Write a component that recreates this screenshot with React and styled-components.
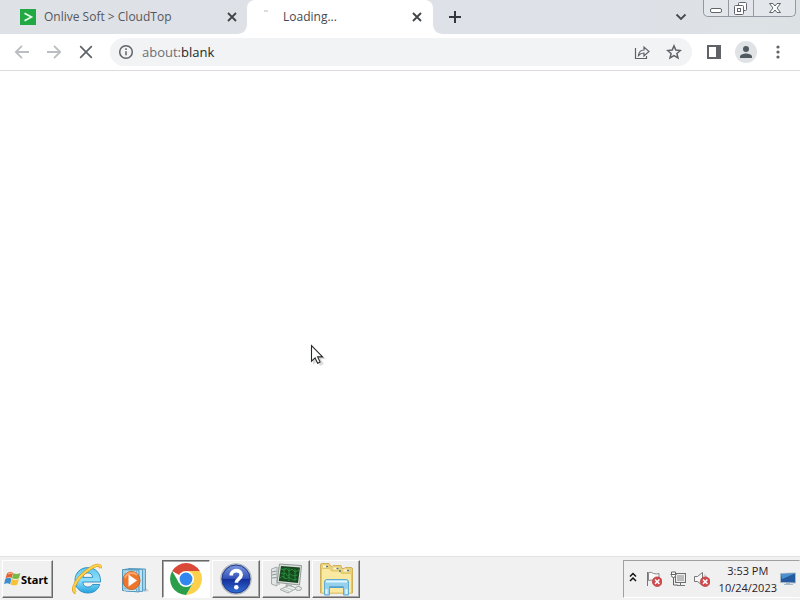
import React from "react";
import styled, { createGlobalStyle, css } from "styled-components";

const GlobalStyle = createGlobalStyle`
  * { box-sizing: border-box; }
  body { margin: 0; background: #fff; font-family: "Open Sans", "Noto Sans", sans-serif; }
  button, input { font: inherit; color: inherit; }
  button { border: 0; padding: 0; background: none; }
  svg { display: block; flex: none; }
`;

const Desktop = styled.div`
  display: flex;
  flex-direction: column;
  min-height: 100vh;
`;

const TabStrip = styled.header`
  display: flex;
  height: 34px;
  background: linear-gradient(90deg, #dee1e6 0%, #dee1e8 75%, #dce2e4 100%);
`;

const Tab = styled.div`
  position: relative;
  display: flex;
  align-items: center;
  flex: 0 1 ${(p) => (p.$active ? 186 : 247)}px;
  min-width: 0;
  padding: 0 ${(p) => (p.$active ? 8 : 7)}px 0 ${(p) => (p.$active ? 12 : 20)}px;
  color: ${(p) => (p.$active ? "#45494d" : "#54585d")};
  ${(p) =>
    p.$active &&
    css`
      background: #fff;
      border-radius: 8px 8px 0 0;
      &::before,
      &::after {
        content: "";
        position: absolute;
        bottom: 0;
        width: 8px;
        height: 8px;
      }
      &::before {
        left: -8px;
        background: radial-gradient(circle at 0 0, transparent 7px, #fff 8px);
      }
      &::after {
        right: -8px;
        background: radial-gradient(circle at 100% 0, transparent 7px, #fff 8px);
      }
    `}
`;

const TabTitle = styled.button`
  flex: 1;
  min-width: 0;
  margin-left: 8px;
  overflow: hidden;
  white-space: nowrap;
  text-align: left;
  font-size: 12px;
  line-height: 18px;
`;

const IconButton = styled.button`
  display: flex;
  align-items: center;
  justify-content: center;
  flex: none;
  width: ${(p) => p.$w || 16}px;
  height: ${(p) => p.$h || 16}px;
  color: ${(p) => p.$color || "#5f6368"};
`;

const NewTab = styled(IconButton)`
  align-self: center;
  margin-left: 12px;
`;

const StripEnd = styled.div`
  display: flex;
  margin-left: auto;
  padding-right: 4px;
`;

const TabSearch = styled(IconButton)`
  align-self: center;
  margin-right: 14px;
`;

const CaptionButtons = styled.div`
  display: flex;
  height: 17px;
  border: 1px solid #9498a0;
  border-top: 0;
  border-radius: 0 0 5px 5px;
  background: #e3e6ea;
`;

const CaptionButton = styled(IconButton)`
  & + & { border-left: 1px solid #9498a0; }
`;

const Toolbar = styled.div`
  display: flex;
  align-items: center;
  height: 37px;
  padding: 0 14px 0 12px;
  background: #fff;
  border-bottom: 1px solid #dcdcde;
`;

const Navigation = styled.nav`
  display: flex;
  gap: 12px;
  margin-right: 14px;
`;

const AddressBar = styled.form`
  display: flex;
  align-items: center;
  flex: 1;
  min-width: 0;
  height: 28px;
  padding: 0 10px 0 8px;
  border-radius: 14px;
  background: #f1f3f4;
`;

const Address = styled.label`
  position: relative;
  display: flex;
  flex: 1;
  min-width: 0;
  margin-left: 8px;
  font-size: 13px;
  line-height: 20px;
`;

const AddressInput = styled.input`
  width: 100%;
  padding: 0;
  border: 0;
  outline: 0;
  background: transparent;
  color: transparent;
  caret-color: #202124;
`;

const AddressText = styled.span`
  position: absolute;
  inset: 0;
  color: #6c7074;
  pointer-events: none;
  b { font-weight: 400; color: #25282b; }
`;

const AddressActions = styled.div`
  display: flex;
  gap: 16px;
`;

const BrowserActions = styled.div`
  display: flex;
  align-items: center;
  gap: 13px;
  margin-left: 14px;
`;

const Avatar = styled(IconButton)`
  border-radius: 50%;
  background: #dfe3e5;
`;

const Page = styled.main`
  position: relative;
  flex: 1;
  background: #fff;
`;

const Pointer = styled.div`
  position: absolute;
  left: 310px;
  top: 273px;
`;

const Taskbar = styled.footer`
  display: flex;
  align-items: center;
  height: 44px;
  padding: 1px 0 0 2px;
  background: #f1f1f1;
  border-top: 1px solid #e2e2e2;
`;

const raised = css`
  border: 1px solid;
  border-color: #fff #696969 #696969 #fff;
  box-shadow: inset -1px -1px #a7a7a7;
`;

const StartButton = styled.button`
  ${raised}
  display: flex;
  align-items: center;
  width: 51px;
  height: 38px;
  padding-left: 1px;
  background: #f0f0f0;
  color: #000;
  font-family: "Noto Sans", "Open Sans", sans-serif;
  font-size: 11px;
  font-weight: 700;
`;

const QuickLaunch = styled.div`
  display: flex;
  gap: 16px;
  margin: 0 11px 0 18px;
`;

const Tasks = styled.div`
  display: flex;
  gap: 2px;
`;

const TaskButton = styled.button`
  ${raised}
  display: flex;
  align-items: center;
  justify-content: center;
  width: 48px;
  height: 38px;
  background: #efefef;
  ${(p) =>
    p.$pressed &&
    css`
      background: #fff;
      border-color: #696969 #fff #fff #696969;
      box-shadow: inset 1px 1px #a7a7a7;
    `}
`;

const Tray = styled.div`
  display: flex;
  align-items: center;
  height: 38px;
  margin-left: auto;
  padding: 0 3px 0 4px;
  border: 1px solid;
  border-color: #a0a0a0 transparent #fff #a0a0a0;
  background: #f0f0f0;
`;

const TrayIcons = styled.div`
  display: flex;
  align-items: center;
  gap: 8px;
  margin: 0 9px 0 8px;
`;

const Clock = styled.time`
  display: flex;
  flex-direction: column;
  align-items: center;
  margin-right: 3px;
  font-size: 11px;
  line-height: 17px;
  color: #2b1b2b;
`;

const Stroke = ({ size = 16, width = 2, children }) => (
  <svg width={size} height={size} viewBox={`0 0 ${size} ${size}`} fill="none" stroke="currentColor" strokeWidth={width}>
    {children}
  </svg>
);

const CloseIcon = () => (
  <Stroke width={1.8}><path d="M4 4l8 8M12 4l-8 8" /></Stroke>
);

const SiteIcon = () => (
  <svg width="16" height="16" viewBox="0 0 16 16">
    <path fill="#23a944" d="M0 0h16v16H0z" />
    <path d="M4.5 4.2L11.5 8l-7 3.8" fill="none" stroke="#e9ffe9" strokeWidth="1.6" />
  </svg>
);

const SpinnerIcon = () => (
  <svg width="16" height="16" viewBox="0 0 16 16">
    <path d="M5 2.2q2-.8 4 0" stroke="#b9bcc0" fill="none" />
  </svg>
);

const WindowsFlag = () => (
  <svg width="17" height="16" viewBox="0 0 17 16">
    <path fill="#e8602c" d="M3 2.5Q6-.2 9 2L7.7 7Q5 5.4 1.6 7.3z" />
    <path fill="#79b843" d="M9.3 2.3Q12.8 4 16.4 2L15 7.3Q12 8.8 8 7.2z" />
    <path fill="#3c8ecc" d="M1.3 7.8Q4.5 6 7.5 7.7L6.1 13.2Q3.2 11.5.1 13.2z" />
    <path fill="#f7c334" d="M7.9 8Q11 9.8 14.8 8l-1.4 5.5Q10.2 15.2 6.6 13.5z" />
    <path d="M4 3Q6 1.5 7.8 2.6" stroke="#ffc39b" fill="none" />
  </svg>
);

const ExplorerE = () => (
  <svg width="32" height="32" viewBox="0 0 32 32">
    <defs>
      <linearGradient id="ie" x2="0" y2="1"><stop stopColor="#5ec6ef" /><stop offset=".5" stopColor="#8fe0fa" /><stop offset="1" stopColor="#23a2df" /></linearGradient>
    </defs>
    <path fill="url(#ie)" stroke="#298bc0" strokeWidth=".9" fillRule="evenodd" d="M29.5 19H11.8c.2 3.1 2 5 5 5 2.2 0 3.7-.9 4.7-2.500h7.200C27 26.900 22.800 30 16.800 30 9.300 30 4 24.700 4 17.300 4 10 9.400 4.600 16.800 4.600c7.900 0 13.100 5.600 12.700 14.400zM11.900 14.400h9.800c-.3-2.800-2-4.500-4.800-4.500s-4.600 1.700-5 4.500z" />
    <path d="M4.800 29.800C-.7 27 5.400 16 14.700 8.700 23.200 1.900 29.400.2 29.500 5.200" fill="none" stroke="#d99b1e" strokeWidth="3.2" />
    <path d="M4.800 29.600C-.7 26.800 5.400 16 14.700 8.700 23.200 1.900 29.400.2 29.500 4.700" fill="none" stroke="#fbd34e" strokeWidth="2" />
  </svg>
);

const MediaPlayer = () => (
  <svg width="32" height="32" viewBox="0 0 32 32">
    <path d="M24 29l6-1-3-3z" fill="#c3cdd3" />
    <path fill="#9ed4ec" stroke="#5d9fc2" d="M9.500 5.500l17 .5v21l-17 1z" />
    <path fill="#bfe4f3" stroke="#5d9fc2" d="M6.500 6l17 .5v22l-17-.5z" />
    <path fill="#9ad1eb" stroke="#5595b8" d="M3.500 6.500l16.500.5v22l-16.500-1.500z" />
    <path d="M5 9h13.500M5 12h13.500M5 24h13.500M5 27l13.500.5" stroke="#d4eff9" />
    <path d="M6 26.500v-19M17.500 28V8" stroke="#6caccc" strokeDasharray="2 1" />
    <ellipse cx="12.500" cy="17.500" rx="8.500" ry="9" fill="#ed762c" stroke="#c9621f" />
    <path d="M6 15a7 6 0 0112-3" fill="none" stroke="#ffa568" strokeWidth="2" />
    <path fill="#fff" d="M9.500 11.500v12l8.500-6z" />
  </svg>
);

const ChromeLogo = () => (
  <svg width="32" height="32" viewBox="0 0 32 32">
    <path fill="#da4937" d="M16 16L2.200 8A16 16 0 0129.800 8H16z" />
    <path fill="#fcd04b" d="M16 16V8h13.800A16 16 0 0116 32l7-12z" />
    <path fill="#2a9e4b" d="M16 16l7 4-7 12A16 16 0 012.200 8l6.900 12z" />
    <circle cx="16" cy="16" r="8" fill="#fff" />
    <circle cx="16" cy="16" r="6.400" fill="#3286ef" />
  </svg>
);

const HelpBadge = () => (
  <svg width="32" height="32" viewBox="0 0 32 32">
    <defs>
      <linearGradient id="help" x2="0" y2="1"><stop stopColor="#829cdf" /><stop offset=".48" stopColor="#3453b9" /><stop offset=".5" stopColor="#152d99" /><stop offset="1" stopColor="#3374da" /></linearGradient>
    </defs>
    <circle cx="16" cy="16" r="15" fill="url(#help)" stroke="#b1b5bd" strokeWidth="1.5" />
    <circle cx="16" cy="16" r="14" fill="none" stroke="#213d91" />
    <path d="M11.200 12.400c0-6.300 10-6.200 10-.6 0 4.200-4.900 3.800-4.900 8" fill="none" stroke="#fff" strokeWidth="3.6" />
    <circle cx="16.300" cy="24.300" r="2.300" fill="#fff" />
  </svg>
);

const Workstation = () => (
  <svg width="34" height="34" viewBox="0 0 34 34">
    <path fill="#e3e6e6" stroke="#a3a8a8" d="M2.500 7L8 5v19l-5.500-2z" />
    <path fill="#c2c7c7" d="M8 5h3v18H8z" />
    <path d="M3 10l4.500-1M3 13l4.500-1M3 16l4.500-.5" stroke="#8b9494" />
    <path fill="#d9ddda" stroke="#929b97" d="M10.500 2l22 1.500-2 19.500L8 20.500z" />
    <path fill="#17481f" d="M12 4l19 1.500-2 15.500L9.800 19z" />
    <path d="M12 7l4 1 1-2 3 3 3-2 3 3 4-2M11.500 11l3 1 2-1 2 3 3-2 2 2 5-1M11 16l3-2 3 3 3-2 4 3 4-1M20 6v13M26 7v12M15 6v11" fill="none" stroke="#28943f" strokeWidth=".9" />
    <path fill="#aab1ad" d="M17 22l6 1v3h-7z" />
    <path fill="#eceeed" stroke="#a2a9a7" d="M11 27.500l9-4 8 2.500-9 5z" />
    <path d="M14 27l6 2.500M17 25.500l7 2.500" stroke="#c1c7c5" />
    <ellipse cx="29.500" cy="26.500" rx="3" ry="2" fill="#e4e8e6" stroke="#9da5a2" />
  </svg>
);

const Folders = () => (
  <svg width="34" height="34" viewBox="0 0 34 34">
    <path fill="#ead078" stroke="#cdb15c" d="M1.500 31V3q0-1.500 1.500-1.500h7l2 3h1l1-1h8l1 3h2l1-1h6q1.500 0 1.500 1.500v24z" />
    <path fill="#fae9a0" stroke="#e0c66e" d="M2.500 31V6.500h8l2 2.500h8l2 2.500h10V31z" />
    <path d="M4 4.500h5M14.500 6.500h5M24.500 8.500h5" stroke="#fff9d6" strokeWidth="2" />
    <path d="M7 4.500h2M17.500 6.500h2M20 9h2M28 8.500h2" stroke="#52758b" strokeWidth="1.5" />
    <path fill="#8fd0f1" fillOpacity=".95" stroke="#62aad0" d="M5.500 33V20q0-2.500 2.500-2.500h19q2.500 0 2.500 2.500v13h-5v-8.500h-14V33z" />
    <path d="M7 19.500h21M7.500 27v5M27.500 27v5" stroke="#dff6ff" strokeWidth="2" />
    <path d="M11 25.500h13" stroke="#529fcd" />
  </svg>
);

const ErrorBadge = () => (
  <g>
    <circle cx="11.200" cy="10.700" r="4.800" fill="#d4474a" stroke="#b64045" strokeWidth=".8" />
    <path d="M9 8.500l4.400 4.400M13.400 8.500L9 12.900" stroke="#fff" strokeWidth="1.5" />
  </g>
);

const PointerIcon = () => (
  <svg width="18" height="23" viewBox="0 0 18 23">
    <path d="M3 4v17l4-4 3 5 4-2-3-5h5z" fill="#c4c4c4" opacity=".6" />
    <path d="M1.500 1.500v15.700l3.600-3.400 2.500 5.400 2.500-1.100-2.500-5.200h5z" fill="#fff" stroke="#26282b" strokeWidth="1.1" />
  </svg>
);

export default function App() {
  return (
    <Desktop>
      <GlobalStyle />
      <TabStrip>
        <Tab>
          <SiteIcon />
          <TabTitle>Onlive Soft &gt; CloudTop</TabTitle>
          <IconButton aria-label="Close CloudTop tab" $color="#404448"><CloseIcon /></IconButton>
        </Tab>
        <Tab $active>
          <SpinnerIcon />
          <TabTitle>Loading...</TabTitle>
          <IconButton aria-label="Close loading tab" $color="#404448"><CloseIcon /></IconButton>
        </Tab>
        <NewTab aria-label="New tab" $w={20} $h={20} $color="#33373b">
          <Stroke><path d="M8 2v12M2 8h12" /></Stroke>
        </NewTab>
        <StripEnd>
          <TabSearch aria-label="Search tabs" $color="#454a4f">
            <Stroke width={1.8}><path d="M3.500 5.500L8 10l4.500-4.500" /></Stroke>
          </TabSearch>
          <CaptionButtons>
            <CaptionButton aria-label="Minimize" $w={24} $color="#62666c">
              <Stroke width={1}><rect x="2.500" y="8.500" width="11" height="4" rx="1.500" fill="#fff" /></Stroke>
            </CaptionButton>
            <CaptionButton aria-label="Restore" $w={25} $color="#62666c">
              <Stroke width={1}>
                <rect x="5.500" y="2.500" width="8" height="8" rx="1" fill="#fff" />
                <rect x="1.500" y="5.500" width="9" height="9" rx="1" fill="#fff" />
                <rect x="4.500" y="8.500" width="3" height="3" />
              </Stroke>
            </CaptionButton>
            <CaptionButton aria-label="Close window" $w={42} $color="#62666c">
              <Stroke width={1}><path fill="#fff" d="M2.500 3.500H6L8 6l2-2.500h3.500L10 8l3.500 4.500H10L8 10l-2 2.500H2.500L6 8z" /></Stroke>
            </CaptionButton>
          </CaptionButtons>
        </StripEnd>
      </TabStrip>

      <Toolbar>
        <Navigation aria-label="Page navigation">
          <IconButton aria-label="Back" $w={20} $h={20} $color="#bbbdc0">
            <Stroke width={1.8}><path d="M15 8H2M8 1.800L1.800 8 8 14.200" /></Stroke>
          </IconButton>
          <IconButton aria-label="Forward" $w={20} $h={20} $color="#bbbdc0">
            <Stroke width={1.8}><path d="M1 8h13M8 1.800L14.200 8 8 14.200" /></Stroke>
          </IconButton>
          <IconButton aria-label="Stop" $w={20} $h={20}>
            <Stroke width={1.7}><path d="M2.200 2.200l11.600 11.600M13.800 2.200L2.200 13.800" /></Stroke>
          </IconButton>
        </Navigation>
        <AddressBar onSubmit={(e) => e.preventDefault()}>
          <IconButton type="button" aria-label="Site information">
            <Stroke width={1.5}><circle cx="8" cy="8" r="6.300" /><path d="M8 7.200v4M8 4.300v1.600" /></Stroke>
          </IconButton>
          <Address>
            <AddressInput aria-label="Address" defaultValue="about:blank" />
            <AddressText aria-hidden="true">about:<b>blank</b></AddressText>
          </Address>
          <AddressActions>
            <IconButton type="button" aria-label="Share">
              <Stroke width={1.2}><path d="M1.500 4v10.500h11V12M4.500 11.500c.5-4 2.300-5.500 5.500-5.500V3l5 4.500L10 12V9c-2.500 0-4 .8-5.500 2.500z" /></Stroke>
            </IconButton>
            <IconButton type="button" aria-label="Bookmark">
              <Stroke width={1.5}><path d="M8 1.900l1.800 4.200 4.600.4-3.500 3 1.100 4.500L8 11.600 4 14l1.100-4.500-3.500-3 4.600-.4z" /></Stroke>
            </IconButton>
          </AddressActions>
        </AddressBar>
        <BrowserActions>
          <IconButton aria-label="Side panel">
            <svg width="16" height="16" viewBox="0 0 16 16"><path fill="currentColor" fillRule="evenodd" d="M1 1h14v14H1zM3 3v10h7V3z" /></svg>
          </IconButton>
          <Avatar aria-label="Profile" $w={22} $h={22}>
            <svg width="14" height="14" viewBox="0 0 14 14" fill="#4f5b61"><circle cx="7" cy="4" r="3" /><path d="M1 13v-1.500C1 9.400 5 8.500 7 8.500s6 .9 6 3V13z" /></svg>
          </Avatar>
          <IconButton aria-label="Browser menu">
            <svg width="16" height="16" viewBox="0 0 16 16" fill="currentColor"><circle cx="8" cy="3" r="1.600" /><circle cx="8" cy="8" r="1.600" /><circle cx="8" cy="13" r="1.600" /></svg>
          </IconButton>
        </BrowserActions>
      </Toolbar>

      <Page><Pointer aria-hidden="true"><PointerIcon /></Pointer></Page>

      <Taskbar>
        <StartButton><WindowsFlag />Start</StartButton>
        <QuickLaunch>
          <IconButton aria-label="Internet Explorer" $w={32} $h={32}><ExplorerE /></IconButton>
          <IconButton aria-label="Media Player" $w={32} $h={32}><MediaPlayer /></IconButton>
        </QuickLaunch>
        <Tasks>
          <TaskButton aria-label="Chrome" $pressed><ChromeLogo /></TaskButton>
          <TaskButton aria-label="Help"><HelpBadge /></TaskButton>
          <TaskButton aria-label="Workstation"><Workstation /></TaskButton>
          <TaskButton aria-label="File Explorer"><Folders /></TaskButton>
        </Tasks>
        <Tray>
          <IconButton aria-label="Show hidden icons" $w={10} $color="#111">
            <svg width="10" height="16" viewBox="0 0 10 16" fill="none" stroke="currentColor" strokeWidth="1.5"><path d="M2 5.500l3-3 3 3M2 10l3-3 3 3" /></svg>
          </IconButton>
          <TrayIcons>
            <IconButton aria-label="Action center">
              <Stroke width={1}><path d="M1.500 15V1" stroke="#777" /><path d="M2.500 1.500q3-.8 5 1 3 1 5.500 0v8q-3 1-5-1-3-.8-5.500 0z" fill="#fafafa" stroke="#888" /><ErrorBadge /></Stroke>
            </IconButton>
            <IconButton aria-label="Network">
              <Stroke width={1}><rect x="5.500" y="2.500" width="10" height="9" fill="#bcbcbc" stroke="#707070" /><path d="M6.500 3.500h8v7h-8z" stroke="#eee" /><path d="M7 14.500h8M10.500 12v3" stroke="#777" /><path d="M1.500 1v3.500q0 2 2 2t2-2V1z" fill="#fff" stroke="#666" /><path d="M3.500 6.500V14h4M.5 3.500h6" stroke="#666" /></Stroke>
            </IconButton>
            <IconButton aria-label="Volume muted">
              <Stroke width={1}><path d="M.5 5.500h3l5-4v13l-5-4h-3z" fill="#f6f6f6" stroke="#777" /><path d="M10.500 3.500q2 2 2 4" stroke="#aaa" /><ErrorBadge /></Stroke>
            </IconButton>
          </TrayIcons>
          <Clock dateTime="2023-10-24T15:53"><span>3:53 PM</span><span>10/24/2023</span></Clock>
          <IconButton aria-label="Show desktop">
            <svg width="16" height="16" viewBox="0 0 16 16"><path fill="#245b9f" stroke="#aabac7" d="M.5 2.500l15-.5v10l-15-.5z" /><path fill="#4e91d0" d="M1 3l14-.5L2 8z" /><path fill="#a5bac8" d="M6 12h4v1h3v1H4v-1h2z" /></svg>
          </IconButton>
        </Tray>
      </Taskbar>
    </Desktop>
  );
}
